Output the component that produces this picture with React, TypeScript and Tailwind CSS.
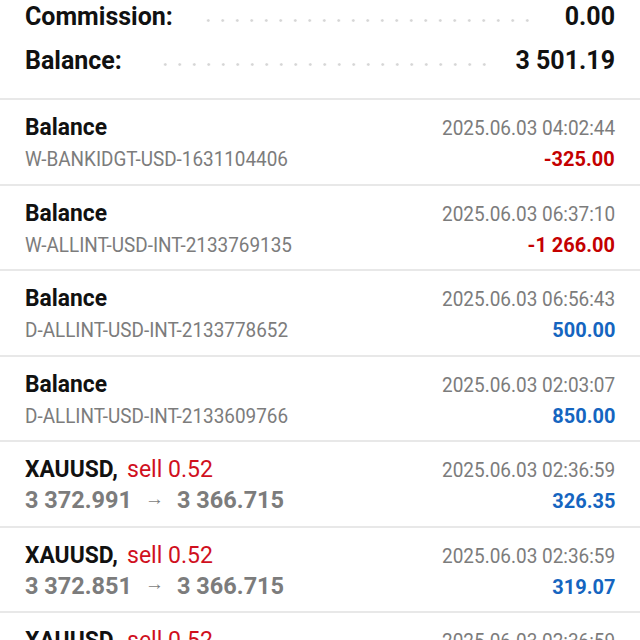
import React from "react";

type Row =
  | {
      kind: "balance";
      title: string;
      comment: string;
      date: string;
      amount: string;
      positive: boolean;
    }
  | {
      kind: "trade";
      symbol: string;
      side: string;
      open: string;
      close: string;
      date: string;
      amount: string;
      positive: boolean;
    };

const rows: Row[] = [
  { kind: "balance", title: "Balance", comment: "W-BANKIDGT-USD-1631104406", date: "2025.06.03 04:02:44", amount: "-325.00", positive: false },
  { kind: "balance", title: "Balance", comment: "W-ALLINT-USD-INT-2133769135", date: "2025.06.03 06:37:10", amount: "-1 266.00", positive: false },
  { kind: "balance", title: "Balance", comment: "D-ALLINT-USD-INT-2133778652", date: "2025.06.03 06:56:43", amount: "500.00", positive: true },
  { kind: "balance", title: "Balance", comment: "D-ALLINT-USD-INT-2133609766", date: "2025.06.03 02:03:07", amount: "850.00", positive: true },
  { kind: "trade", symbol: "XAUUSD", side: "sell 0.52", open: "3 372.991", close: "3 366.715", date: "2025.06.03 02:36:59", amount: "326.35", positive: true },
  { kind: "trade", symbol: "XAUUSD", side: "sell 0.52", open: "3 372.851", close: "3 366.715", date: "2025.06.03 02:36:59", amount: "319.07", positive: true },
  { kind: "trade", symbol: "XAUUSD", side: "sell 0.52", open: "3 372.840", close: "3 366.715", date: "2025.06.03 02:36:59", amount: "318.81", positive: true },
];

function Leader() {
  return (
    <div className="flex-1 self-end mb-[10px] h-[3px] bg-[radial-gradient(circle,#d6d6d6_1px,transparent_1.6px)] bg-[length:14.5px_3px] bg-repeat-x" />
  );
}

function SummaryLine({ label, value, gapL, gapR }: { label: string; value: string; gapL: string; gapR: string }) {
  return (
    <div className="flex items-stretch text-[25px] leading-[30px] font-bold text-[#111]">
      <span>{label}</span>
      <div className={`flex flex-1 ${gapL} ${gapR}`}>
        <Leader />
      </div>
      <span>{value}</span>
    </div>
  );
}

// the app uses a condensed face; squeeze Roboto horizontally to match
function HistoryRow({ row }: { row: Row }) {
  const amountColor = row.positive ? "text-[#1565c0]" : "text-[#c40000]";
  return (
    <div className="flex h-[85.5px] shrink-0 border-t-2 border-[#e8e8e8] px-[25px]">
      <div className="flex-1 pt-[11px]">
        {row.kind === "balance" ? (
          <>
            <div className="text-[24px] leading-[32px] font-bold text-[#111]">
              <span className="inline-block origin-left scale-x-[0.95]">{row.title}</span>
            </div>
            <div className="text-[21px] leading-[32px] text-[#7c7c7c] whitespace-nowrap">
              <span className="inline-block origin-left scale-x-[0.9]">{row.comment}</span>
            </div>
          </>
        ) : (
          <>
            <div className="flex items-baseline text-[24px] leading-[32px] whitespace-nowrap">
              <span className="inline-block w-[102px] origin-left scale-x-[0.95] font-bold text-[#111]">{row.symbol},</span>
              <span className="inline-block origin-left scale-x-[0.96] text-[#d0101e]">{row.side}</span>
            </div>
            <div className="flex items-center h-[32px] text-[23.5px] font-bold text-[#7c7c7c] whitespace-nowrap">
              <span>{row.open}</span>
              <span className="mx-[13px] -translate-y-[2px] text-[19px] font-normal">→</span>
              <span>{row.close}</span>
            </div>
          </>
        )}
      </div>
      <div className="flex flex-col items-end pt-[13px] whitespace-nowrap">
        <div className="text-[20.5px] leading-[31px] text-[#7c7c7c]">
          <span className="inline-block origin-right scale-x-[0.925]">{row.date}</span>
        </div>
        <div className={`text-[21px] leading-[31px] font-bold ${amountColor}`}>
          <span className="inline-block origin-right scale-x-[0.95]">{row.amount}</span>
        </div>
      </div>
    </div>
  );
}

export default function App() {
  return (
    <div className="w-[640px] h-[640px] overflow-hidden bg-white font-['Roboto',sans-serif] flex flex-col">
      {/* Summary */}
      <div className="px-[25px] pt-[1.5px] pb-[22.5px] flex flex-col gap-[14px] shrink-0">
        <SummaryLine label="Commission:" value="0.00" gapL="ml-[28px]" gapR="mr-[25px]" />
        <SummaryLine label="Balance:" value="3 501.19" gapL="ml-[36px]" gapR="mr-[18px]" />
      </div>

      {/* Deals */}
      {rows.map((row, i) => (
        <HistoryRow key={i} row={row} />
      ))}
    </div>
  );
}
